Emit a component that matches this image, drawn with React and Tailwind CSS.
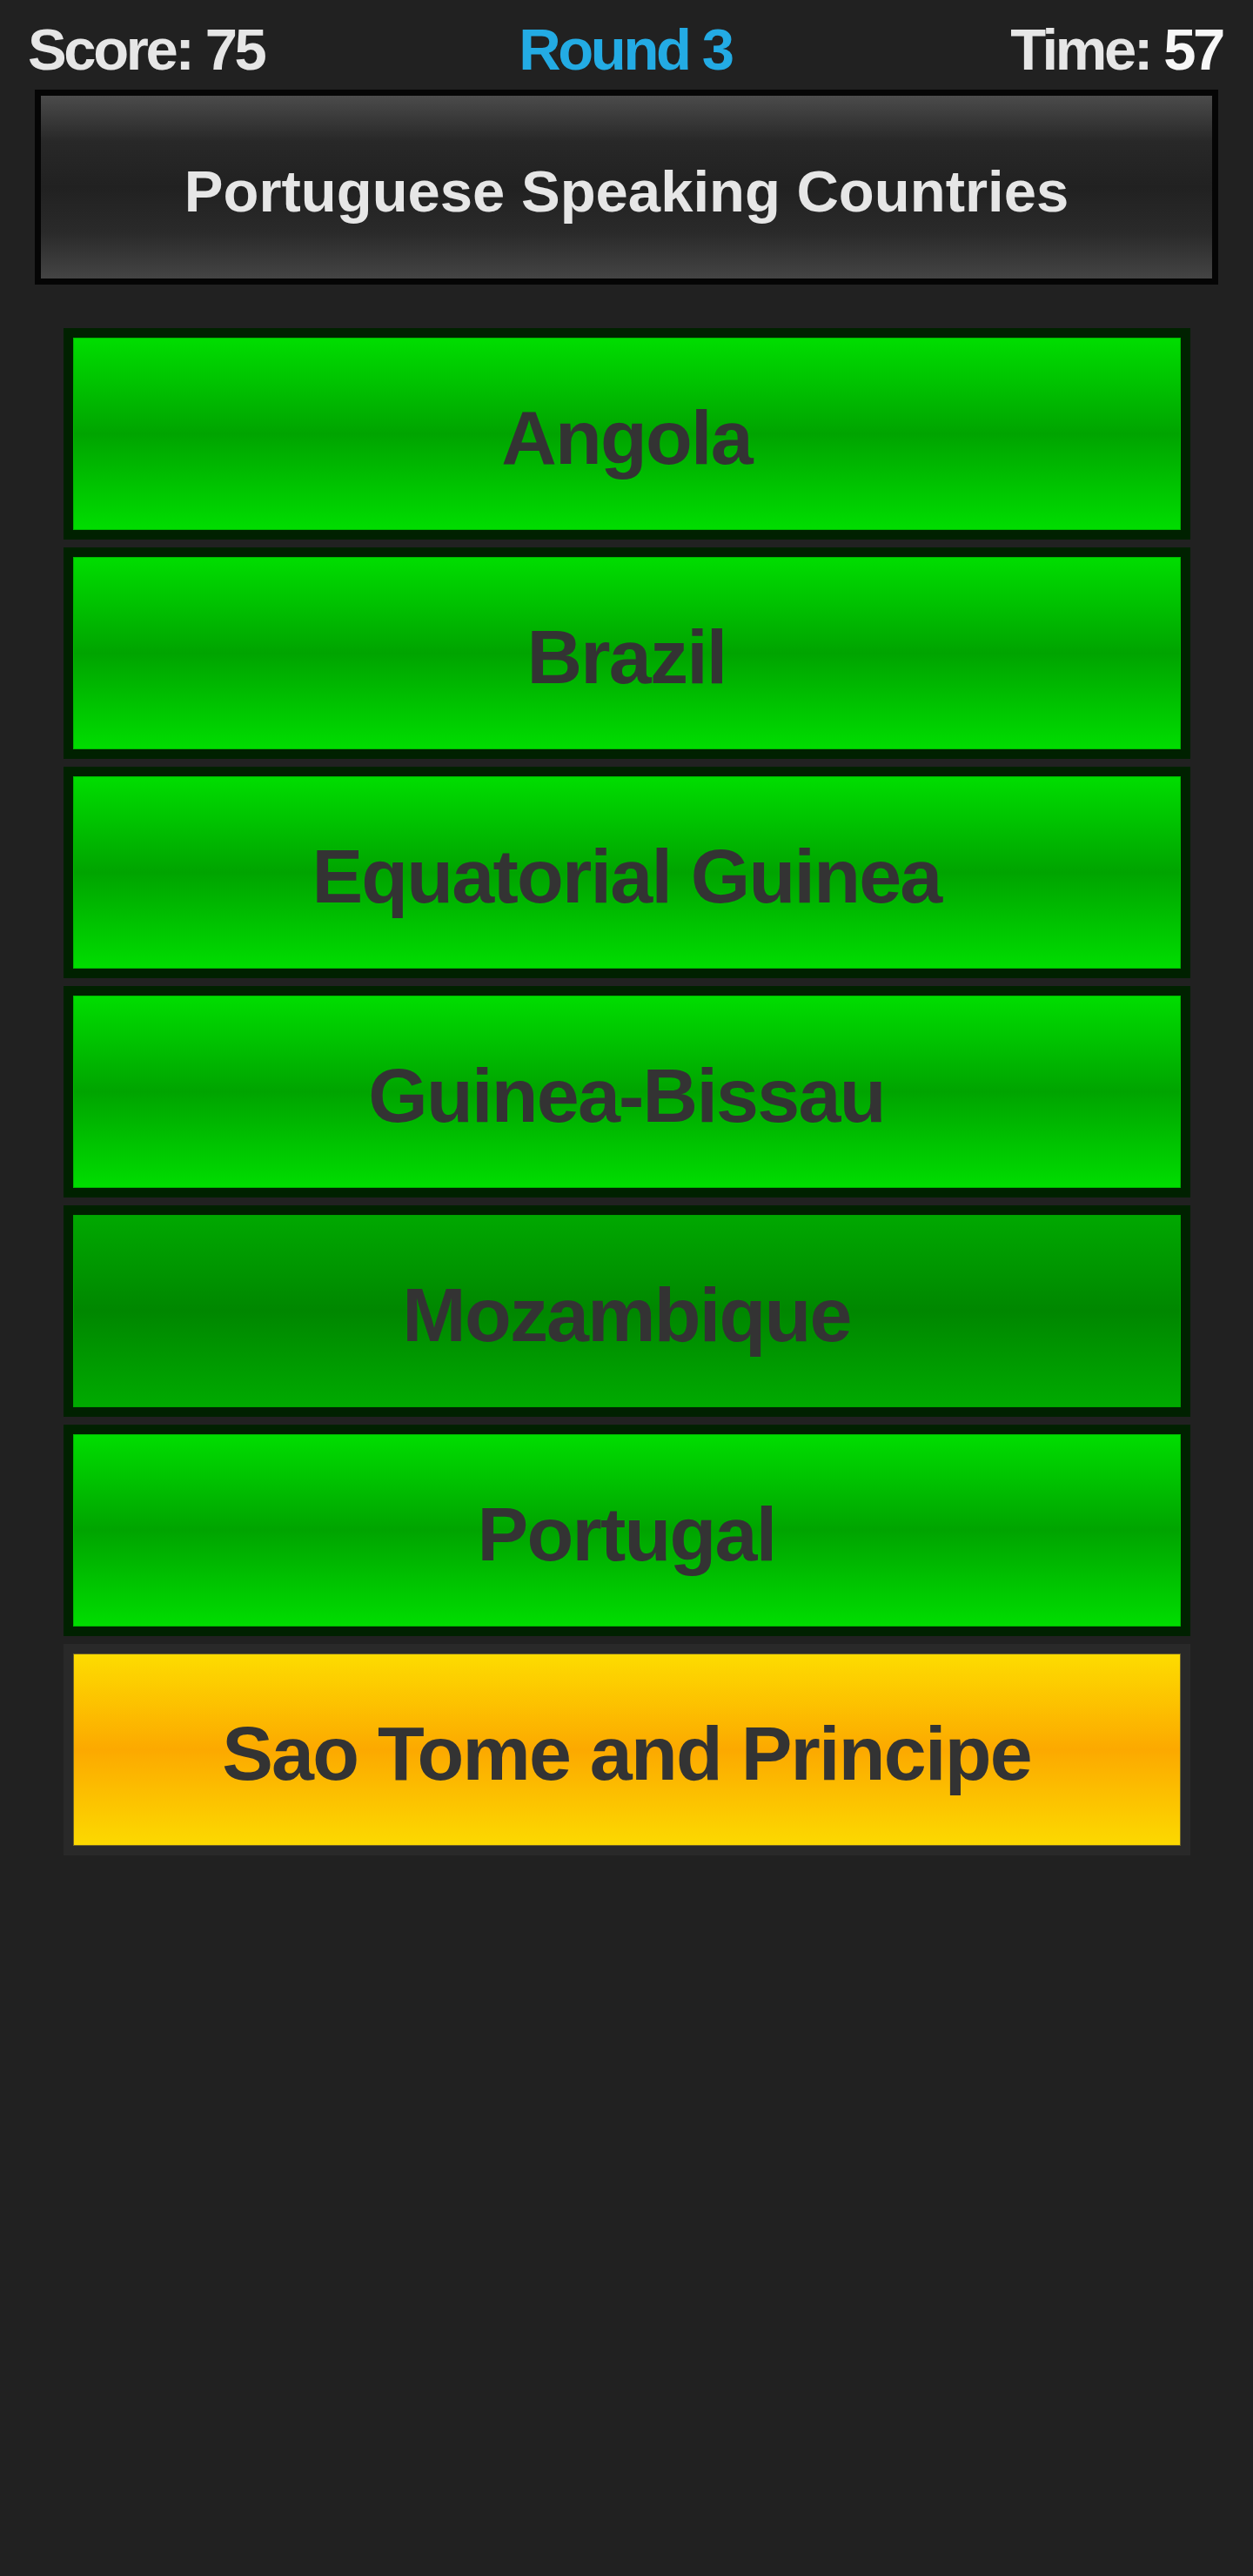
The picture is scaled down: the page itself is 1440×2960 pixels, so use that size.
import React from "react";

const answers = [
  { label: "Angola", kind: "green" },
  { label: "Brazil", kind: "green" },
  { label: "Equatorial Guinea", kind: "green" },
  { label: "Guinea-Bissau", kind: "green" },
  { label: "Mozambique", kind: "dark" },
  { label: "Portugal", kind: "green" },
  { label: "Sao Tome and Principe", kind: "yellow" },
];

function Answer({ label, kind }) {
  const outer =
    kind === "yellow" ? "border-[#292929]" : "border-[#002100]";
  const inner =
    kind === "yellow"
      ? "bg-[linear-gradient(to_bottom,#fddc00_0%,#fca900_50%,#fcd900_100%)] border-[#6f6326]"
      : kind === "dark"
      ? "bg-[linear-gradient(to_bottom,#00a800_0%,#008700_50%,#00aa00_100%)] border-[#00a000]"
      : "bg-[linear-gradient(to_bottom,#00dd00_0%,#00a400_50%,#00dd00_100%)] border-[#00b800]";
  return (
    <div className={`mx-auto w-[1295px] h-[243px] border-[11px] ${outer}`}>
      <div
        className={`h-full w-full border flex items-center justify-center pt-[8px] ${inner}`}
      >
        <span className="text-[88px] leading-none font-bold tracking-[-0.02em] text-[#333333]">
          {label}
        </span>
      </div>
    </div>
  );
}

export default function App() {
  return (
    <div
      className="min-h-[2960px] w-full bg-[#212121]"
      style={{ fontFamily: '"Liberation Sans", Arial, sans-serif' }}
    >
      <div className="grid grid-cols-3 items-start pt-[23px] pl-[32px] pr-[35px] text-[67px] leading-none font-bold tracking-[-0.05em]">
        <span className="text-left text-[#e6e6e6]">Score: 75</span>
        <span className="text-center text-[#23abe4]">Round 3</span>
        <span className="text-right text-[#e6e6e6]">
          Time: <span className="text-[#f7f7f7]">57</span>
        </span>
      </div>

      <div className="mx-auto mt-[13px] w-[1360px] h-[224px] border-[7px] border-[#050505] bg-[linear-gradient(to_bottom,#4b4b4b_0%,#282828_25%,#212121_50%,#2a2a2a_75%,#444444_100%)] flex items-center justify-center pt-[8px]">
        <span className="text-[67px] leading-none font-bold text-[#e6e6e6]">
          Portuguese Speaking Countries
        </span>
      </div>

      <div className="mt-[50px] flex flex-col gap-[9px]">
        {answers.map((a) => (
          <Answer key={a.label} {...a} />
        ))}
      </div>
    </div>
  );
}
